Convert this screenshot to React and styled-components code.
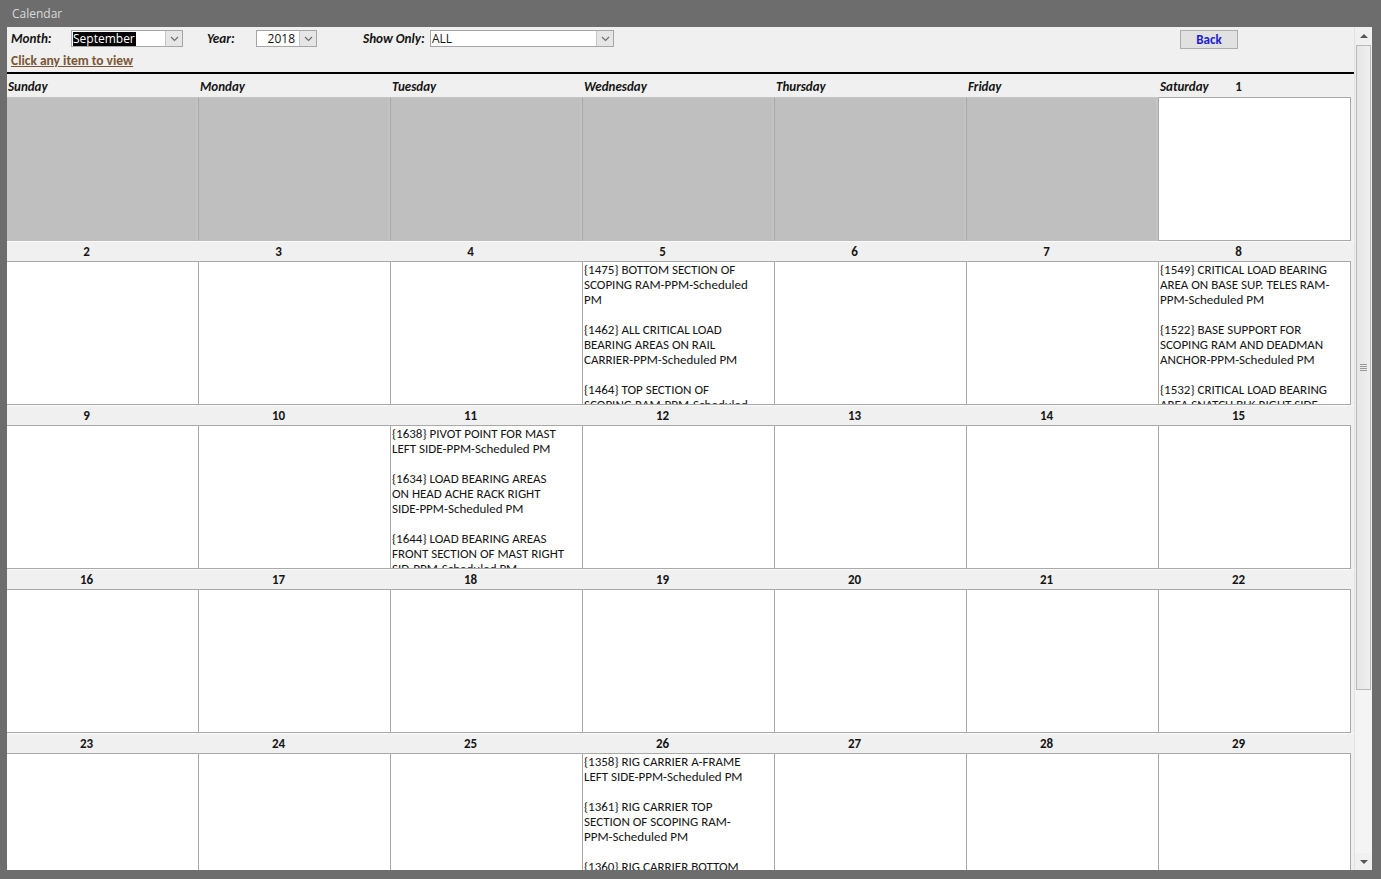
import React from 'react';
import styled, { createGlobalStyle } from 'styled-components';

const GlobalStyle = createGlobalStyle`
  html, body {
    margin: 0;
    padding: 0;
    background: #6d6d6d;
  }
  body {
    font-family: Carlito, Lato, 'Open Sans', sans-serif;
    color: #151515;
  }
`;

const Window = styled.div`
  width: 1381px;
  height: 879px;
  background: #6d6d6d;
  display: flex;
  flex-direction: column;
  overflow: hidden;
`;

const TitleBar = styled.div`
  height: 27px;
  flex-shrink: 0;
  display: flex;
  align-items: center;
  padding-left: 12px;
  color: #dadada;
  font-family: 'Open Sans', 'Noto Sans', sans-serif;
  font-size: 12px;
`;

const Body = styled.div`
  flex: 1;
  min-height: 0;
  display: flex;
  padding: 0 9px 9px 7px;
`;

const Pane = styled.div`
  flex: 1;
  min-width: 0;
  background: #f0f0f0;
  overflow: hidden;
  display: flex;
  flex-direction: column;
`;

const Header = styled.header`
  height: 47px;
  flex-shrink: 0;
  box-sizing: border-box;
  padding: 3px 0 0 4px;
  border-bottom: 2px solid #000;
  margin-right: -2px;
`;

const ControlRow = styled.div`
  display: flex;
  align-items: center;
  height: 17px;
`;

const Label = styled.span`
  width: ${p => p.$w}px;
  margin-left: ${p => p.$ml || 0}px;
  font-weight: 700;
  font-style: italic;
  font-size: 13.2px;
`;

const Select = styled.div`
  width: ${p => p.$w}px;
  height: 17px;
  box-sizing: border-box;
  border: 1px solid #a6a6a6;
  background: #fff;
  display: flex;
`;

const SelectValue = styled.div`
  flex: 1;
  display: flex;
  align-items: center;
  justify-content: ${p => (p.$right ? 'flex-end' : 'flex-start')};
  padding: 0 ${p => (p.$right ? 4 : 1)}px 0 1px;
  font-size: 12px;
  font-family: 'Open Sans', 'Noto Sans', sans-serif;
  overflow: hidden;
  white-space: nowrap;
`;

const Highlight = styled.span`
  background: #000;
  color: #fff;
  line-height: 14px;
  padding-right: 1px;
`;

const DropButton = styled.div`
  width: 16px;
  background: #e6e6e6;
  border-left: 1px solid #c6c6c6;
  display: flex;
  align-items: center;
  justify-content: center;
`;

const BackButton = styled.button`
  margin-left: ${p => p.$ml}px;
  margin-top: 2px;
  width: 58px;
  height: 19px;
  background: #e1e1e1;
  border: 1px solid #adadad;
  color: #1d1dd0;
  font-family: inherit;
  font-weight: 700;
  font-size: 13px;
  padding: 0;
`;

const ItemLink = styled.a`
  display: inline-block;
  margin-top: 6px;
  color: #7c5634;
  font-weight: 700;
  font-size: 13.5px;
  text-decoration: underline;
  line-height: 15px;
`;

const Calendar = styled.div`
  display: flex;
  flex-direction: column;
`;

const NumberRow = styled.div`
  display: grid;
  grid-template-columns: repeat(7, 192px);
  height: ${p => p.$h}px;
  box-sizing: border-box;
  border-top: 1px solid ${p => (p.$first ? 'transparent' : '#fafafa')};
  background: #f0f0f0;
`;

const HeaderCell = styled.div`
  display: grid;
  align-items: center;
  & > * {
    grid-area: 1 / 1;
  }
`;

const DayName = styled.span`
  justify-self: start;
  padding-left: 1px;
  font-weight: 700;
  font-style: italic;
  font-size: 13px;
`;

const DayNum = styled.span`
  width: 159px;
  text-align: center;
  font-weight: 700;
  font-size: 13px;
`;

const CellRow = styled.div`
  display: grid;
  grid-template-columns: repeat(7, 192px);
  height: 144px;
  flex-shrink: 0;
`;

const Cell = styled.div`
  box-sizing: border-box;
  overflow: hidden;
  background: ${p => (p.$blank ? '#bfbfbf' : '#fff')};
  border-top: 1px solid ${p => (p.$blank ? '#c6c6c6' : '#a9a9a9')};
  border-bottom: 1px solid ${p => (p.$blank ? '#bfbfbf' : '#a9a9a9')};
  border-right: 1px solid #a9a9a9;
  box-shadow: ${p => (p.$blank ? 'inset -2px 0 0 #c4c4c4' : 'none')};
  padding: 0 0 0 1px;
`;

const Entry = styled.div`
  width: 173px;
  font-size: 13px;
  line-height: 15px;
  color: #151515;
  & + & {
    margin-top: 15px;
  }
`;

const ScrollBar = styled.div`
  width: 17px;
  flex-shrink: 0;
  background: #f0f0f0;
  border-left: 1px solid #e2e2e2;
  display: flex;
  flex-direction: column;
`;

const ArrowButton = styled.div`
  height: 17px;
  flex-shrink: 0;
  display: flex;
  align-items: center;
  justify-content: center;
  background: #f0f0f0;
`;

const Arrow = styled.span`
  width: 0;
  height: 0;
  border-left: 4px solid transparent;
  border-right: 4px solid transparent;
  ${p => (p.$up ? 'border-bottom: 4px solid #555;' : 'border-top: 4px solid #555;')}
`;

const Thumb = styled.div`
  height: 645px;
  margin: 1px 1px 0;
  box-sizing: border-box;
  border: 1px solid #b8b8b8;
  background: linear-gradient(to right, #e6e6e6, #efefef);
  display: flex;
  align-items: center;
  justify-content: center;
`;

const Grip = styled.span`
  width: 7px;
  height: 7px;
  background: repeating-linear-gradient(to bottom, #9a9a9a 0 1px, transparent 1px 2px);
`;

const Track = styled.div`
  flex: 1;
  background: #f4f4f4;
`;

function Chevron() {
  return (
    <svg width="9" height="6" viewBox="0 0 9 6">
      <polyline points="1,1 4.5,4.5 8,1" fill="none" stroke="#6a6a6a" strokeWidth="1.1" />
    </svg>
  );
}

const DAYS = ['Sunday', 'Monday', 'Tuesday', 'Wednesday', 'Thursday', 'Friday', 'Saturday'];

const ITEMS = {
  5: [
    '{1475} BOTTOM SECTION OF SCOPING RAM-PPM-Scheduled PM',
    '{1462} ALL CRITICAL LOAD BEARING AREAS ON RAIL CARRIER-PPM-Scheduled PM',
    '{1464} TOP SECTION OF SCOPING RAM-PPM-Scheduled PM'
  ],
  8: [
    '{1549} CRITICAL LOAD BEARING AREA ON BASE SUP. TELES RAM-PPM-Scheduled PM',
    '{1522} BASE SUPPORT FOR SCOPING RAM AND DEADMAN ANCHOR-PPM-Scheduled PM',
    '{1532} CRITICAL LOAD BEARING AREA SNATCH BLK RIGHT SIDE-PPM-Scheduled PM'
  ],
  11: [
    '{1638} PIVOT POINT FOR MAST LEFT SIDE-PPM-Scheduled PM',
    '{1634} LOAD BEARING AREAS ON HEAD ACHE RACK RIGHT SIDE-PPM-Scheduled PM',
    '{1644} LOAD BEARING AREAS FRONT SECTION OF MAST RIGHT SID-PPM-Scheduled PM'
  ],
  26: [
    '{1358} RIG CARRIER A-FRAME LEFT SIDE-PPM-Scheduled PM',
    '{1361} RIG CARRIER TOP SECTION OF SCOPING RAM-PPM-Scheduled PM',
    '{1360} RIG CARRIER BOTTOM SECTION OF SCOPING RAM-PPM-Scheduled PM'
  ]
};

// September 2018 starts on a Saturday
function buildWeeks() {
  const weeks = [];
  let week = Array(6).fill(null);
  for (let d = 1; d <= 30; d++) {
    week.push(d);
    if (week.length === 7) {
      weeks.push(week);
      week = [];
    }
  }
  if (week.length) weeks.push(week);
  return weeks;
}

export default function App() {
  const weeks = buildWeeks();

  return (
    <Window>
      <GlobalStyle />
      <TitleBar>Calendar</TitleBar>
      <Body>
        <Pane>
          <Header>
            <ControlRow>
              <Label $w={60}>Month:</Label>
              <Select $w={112}>
                <SelectValue>
                  <Highlight>September</Highlight>
                </SelectValue>
                <DropButton>
                  <Chevron />
                </DropButton>
              </Select>
              <Label $w={49} $ml={24}>Year:</Label>
              <Select $w={61}>
                <SelectValue $right>2018</SelectValue>
                <DropButton>
                  <Chevron />
                </DropButton>
              </Select>
              <Label $w={67} $ml={46}>Show Only:</Label>
              <Select $w={184}>
                <SelectValue>ALL</SelectValue>
                <DropButton>
                  <Chevron />
                </DropButton>
              </Select>
              <BackButton $ml={566}>Back</BackButton>
            </ControlRow>
            <ItemLink>Click any item to view</ItemLink>
          </Header>
          <Calendar>
            {weeks.map((week, wi) => (
              <React.Fragment key={wi}>
                <NumberRow $h={wi === 0 ? 23 : 20} $first={wi === 0}>
                  {week.map((d, i) => (
                    <HeaderCell key={i}>
                      {wi === 0 && <DayName>{DAYS[i]}</DayName>}
                      <DayNum>{d || ''}</DayNum>
                    </HeaderCell>
                  ))}
                </NumberRow>
                <CellRow>
                  {week.map((d, i) => (
                    <Cell key={i} $blank={!d}>
                      {d && ITEMS[d]
                        ? ITEMS[d].map(text => <Entry key={text}>{text}</Entry>)
                        : null}
                    </Cell>
                  ))}
                </CellRow>
              </React.Fragment>
            ))}
          </Calendar>
        </Pane>
        <ScrollBar>
          <ArrowButton>
            <Arrow $up />
          </ArrowButton>
          <Thumb>
            <Grip />
          </Thumb>
          <Track />
          <ArrowButton>
            <Arrow />
          </ArrowButton>
        </ScrollBar>
      </Body>
    </Window>
  );
}
